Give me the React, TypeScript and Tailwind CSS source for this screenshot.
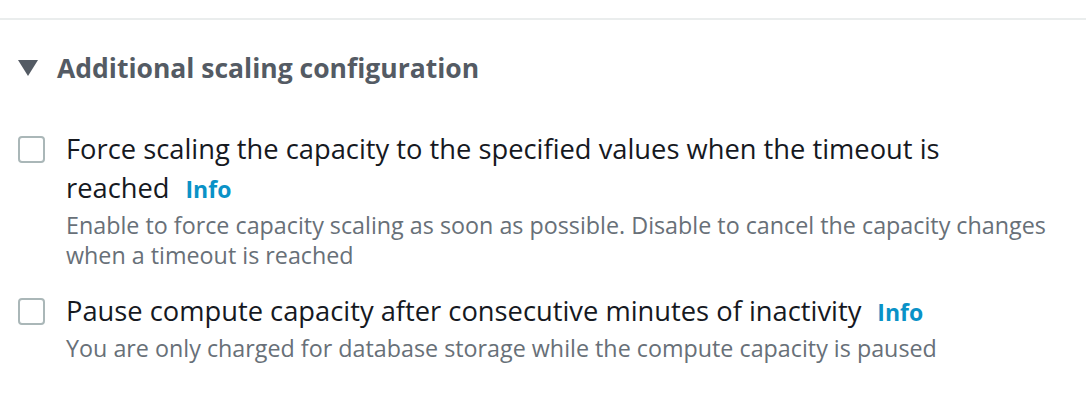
const font = { fontFamily: '"Open Sans", "Noto Sans", sans-serif' };

function Checkbox() {
  return (
    <span className="mt-[7px] h-[27px] w-[27px] shrink-0 rounded-[4px] border-2 border-[#aab7b8] bg-white" />
  );
}

function Option({ label, description }: { label: string; description: string }) {
  return (
    <div className="flex gap-[21px]">
      <Checkbox />
      <div className="min-w-0 flex-1">
        <div className="max-w-[900px] text-[27.3px] leading-[39px] text-[#16191f]">
          <span>{label}</span>
          <a className="ml-[16px] inline-block text-[23px] font-bold leading-[28px] text-[#0a92c7]">Info</a>
        </div>
        <div className="mt-[3px] text-[23.3px] leading-[30px] text-[#687078]">{description}</div>
      </div>
    </div>
  );
}

export default function App() {
  return (
    <div className="h-[408px] w-[1086px] bg-white" style={font}>
      <div className="pt-[18px]">
        <div className="h-[2px] bg-[#eaeded]" />
      </div>
      <div className="px-[18px] pt-[32px]">
        <div className="flex items-center gap-[19px]">
          <svg width="20" height="16" viewBox="0 0 20 16">
            <path d="M0 0h20L10 16z" fill="#545b64" />
          </svg>
          <h2 className="text-[26.5px] font-bold leading-[32px] text-[#545b64]">
            Additional scaling configuration
          </h2>
        </div>
        <div className="mt-[45px] flex flex-col gap-[21px] pr-[6px]">
          <Option
            label="Force scaling the capacity to the specified values when the timeout is reached"
            description="Enable to force capacity scaling as soon as possible. Disable to cancel the capacity changes when a timeout is reached"
          />
          <Option
            label="Pause compute capacity after consecutive minutes of inactivity"
            description="You are only charged for database storage while the compute capacity is paused"
          />
        </div>
      </div>
    </div>
  );
}
